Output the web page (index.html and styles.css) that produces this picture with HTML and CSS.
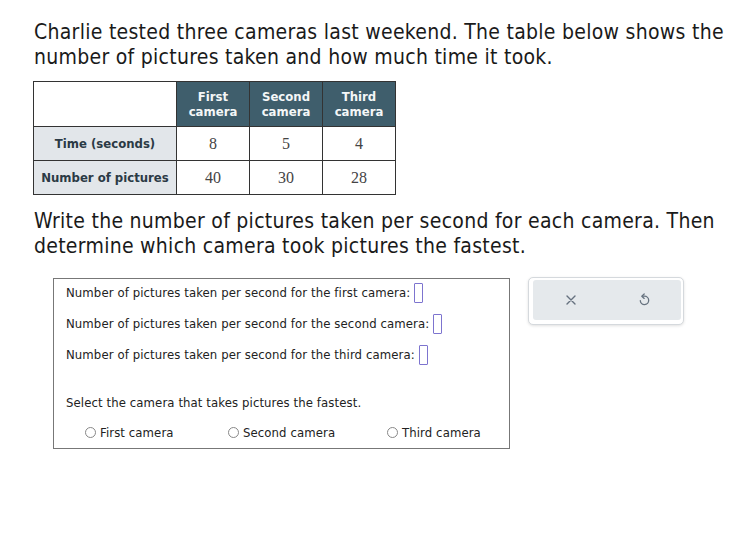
FILE: index.html
```html
<!DOCTYPE html>
<html>
<head>
<meta charset="utf-8">
<link rel="stylesheet" href="styles.css">
</head>
<body>
<div class="page">
  <p class="prompt">Charlie tested three cameras last weekend. The table below shows the number of pictures taken and how much time it took.</p>
  <table class="data">
    <tr>
      <th class="corner"></th>
      <th class="head">First<br>camera</th>
      <th class="head">Second<br>camera</th>
      <th class="head">Third<br>camera</th>
    </tr>
    <tr>
      <th class="rowhead">Time (seconds)</th>
      <td>8</td><td>5</td><td>4</td>
    </tr>
    <tr>
      <th class="rowhead">Number of pictures</th>
      <td>40</td><td>30</td><td>28</td>
    </tr>
  </table>
  <p class="prompt second">Write the number of pictures taken per second for each camera. Then determine which camera took pictures the fastest.</p>
  <div class="work">
    <div class="answer">
      <div class="line">Number of pictures taken per second for the first camera:<span class="blank"></span></div>
      <div class="line">Number of pictures taken per second for the second camera:<span class="blank"></span></div>
      <div class="line">Number of pictures taken per second for the third camera:<span class="blank"></span></div>
      <div class="select">Select the camera that takes pictures the fastest.</div>
      <div class="choices">
        <label class="choice c1"><span class="radio"></span>First camera</label>
        <label class="choice c2"><span class="radio"></span>Second camera</label>
        <label class="choice c3"><span class="radio"></span>Third camera</label>
      </div>
    </div>
    <div class="tools">
      <div class="tools-inner">
        <svg class="ico" width="12" height="12" viewBox="0 0 12 12"><path d="M2 2 L10 10 M10 2 L2 10" stroke="#66727f" stroke-width="1.4" fill="none" stroke-linecap="round"/></svg>
        <svg class="ico" width="14" height="14" viewBox="0 0 14 14"><path d="M6.5 3.2 H7.5 A4.2 4.2 0 1 1 3.3 7.6" stroke="#66727f" stroke-width="1.3" fill="none" stroke-linecap="round"/><path d="M7.2 1 L4.8 3.2 L7.2 5.4" stroke="#66727f" stroke-width="1.3" fill="none" stroke-linecap="round" stroke-linejoin="round"/></svg>
      </div>
    </div>
  </div>
</div>
</body>
</html>
```
FILE: styles.css
```css
html, body {
  margin: 0;
  padding: 0;
  background: #ffffff;
}
.page {
  padding: 20px 0 0 34px;
  font-family: "DejaVu Sans Condensed", "DejaVu Sans", sans-serif;
  color: #1a1a1a;
}
.prompt {
  margin: 0;
  font-size: 21px;
  letter-spacing: 0.28px;
  line-height: 24.5px;
  width: 710px;
}
.data {
  margin-top: 12px;
  margin-left: -1px;
  border-collapse: collapse;
  border: 1.5px solid #555;
}
.data th, .data td {
  border: 1px solid #333;
  padding: 0;
  text-align: center;
}
.corner {
  width: 142px;
  height: 44px;
  background: #fff;
}
.head {
  width: 72px;
  background: #3f5e6c;
  color: #f4f6f7;
  font-size: 13px;
  font-weight: bold;
  line-height: 15px;
}
.rowhead {
  background: #e2e6ea;
  color: #2b3a45;
  font-size: 13px;
  font-weight: bold;
  height: 33px;
}
.data td {
  font-family: "Liberation Serif", serif;
  font-size: 16px;
  color: #444;
}
.prompt.second {
  margin-top: 14px;
}
.work {
  display: flex;
  align-items: flex-start;
  margin-top: 20px;
  margin-left: 19px;
}
.answer {
  width: 443px;
  border: 1px solid #777;
  padding: 0 0 0 12px;
  height: 169px;
  font-size: 13px;
  letter-spacing: 0.1px;
  color: #222;
}
.line {
  display: flex;
  align-items: center;
  height: 31px;
  margin-top: -2px;
  margin-bottom: 2px;
}
.blank {
  display: inline-block;
  width: 7px;
  height: 18px;
  border: 1.5px solid #7d74cf;
  border-radius: 1px;
  margin-left: 4px;
}
.select {
  margin-top: 25px;
  line-height: 15px;
}
.choices {
  display: flex;
  margin-top: 15px;
  padding-left: 19px;
}
.choice {
  display: flex;
  align-items: center;
}
.c1 { width: 143px; }
.c2 { width: 159px; }
.radio {
  display: inline-block;
  width: 9px;
  height: 9px;
  border: 1px solid #888;
  border-radius: 50%;
  margin-right: 4px;
}
.tools {
  margin-left: 18px;
  margin-top: -1px;
  width: 148px;
  height: 40px;
  border: 1px solid #d5d9dd;
  border-radius: 5px;
  box-shadow: 0 1px 3px rgba(0,0,0,0.12);
  background: #fff;
  padding: 2px 2px 4px 4px;
}
.tools-inner {
  height: 100%;
  background: #e5e9ec;
  border-radius: 3px;
  display: flex;
  align-items: center;
  gap: 60px;
  padding-left: 32px;
}
.ico {
  display: block;
}
```
